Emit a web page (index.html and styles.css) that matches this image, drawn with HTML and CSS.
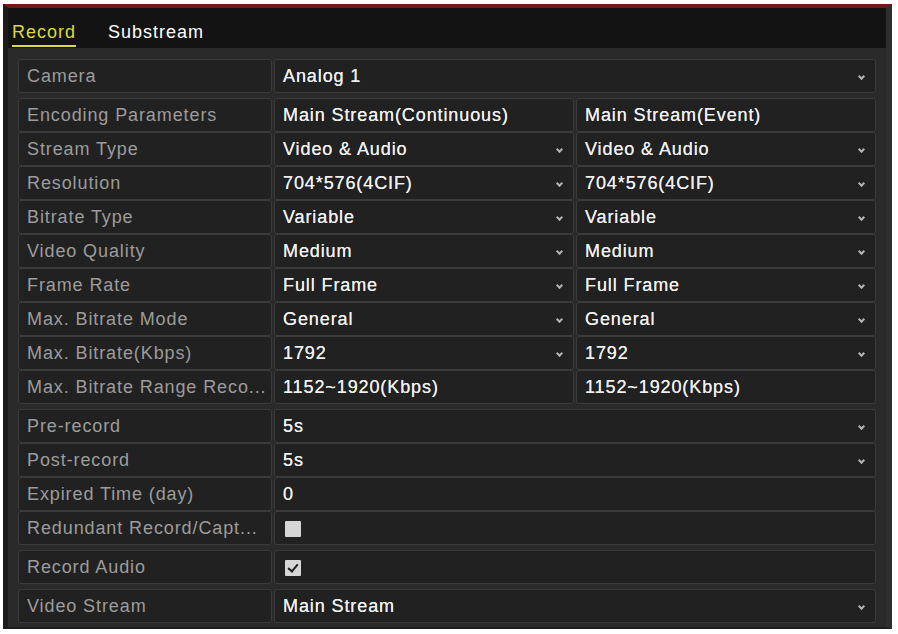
FILE: index.html
```html
<!DOCTYPE html>
<html lang="en">
<head>
    <meta charset="UTF-8">
    <title>Record</title>
    <link rel="stylesheet" href="styles.css">
</head>
<body>
    <div class="panel">
        <div class="tabs">
            <span class="tab active">Record</span>
            <span class="tab">Substream</span>
        </div>

        <div class="content">
            <div class="group">
                <div class="row">
                    <div class="label">Camera</div>
                    <div class="cell select">Analog 1</div>
                </div>
            </div>

            <div class="group">
                <div class="row dual">
                    <div class="label">Encoding Parameters</div>
                    <div class="cell">Main Stream(Continuous)</div>
                    <div class="cell">Main Stream(Event)</div>
                </div>
                <div class="row dual">
                    <div class="label">Stream Type</div>
                    <div class="cell select">Video &amp; Audio</div>
                    <div class="cell select">Video &amp; Audio</div>
                </div>
                <div class="row dual">
                    <div class="label">Resolution</div>
                    <div class="cell select">704*576(4CIF)</div>
                    <div class="cell select">704*576(4CIF)</div>
                </div>
                <div class="row dual">
                    <div class="label">Bitrate Type</div>
                    <div class="cell select">Variable</div>
                    <div class="cell select">Variable</div>
                </div>
                <div class="row dual">
                    <div class="label">Video Quality</div>
                    <div class="cell select">Medium</div>
                    <div class="cell select">Medium</div>
                </div>
                <div class="row dual">
                    <div class="label">Frame Rate</div>
                    <div class="cell select">Full Frame</div>
                    <div class="cell select">Full Frame</div>
                </div>
                <div class="row dual">
                    <div class="label">Max. Bitrate Mode</div>
                    <div class="cell select">General</div>
                    <div class="cell select">General</div>
                </div>
                <div class="row dual">
                    <div class="label">Max. Bitrate(Kbps)</div>
                    <div class="cell select">1792</div>
                    <div class="cell select">1792</div>
                </div>
                <div class="row dual">
                    <div class="label">Max. Bitrate Range Reco...</div>
                    <div class="cell">1152~1920(Kbps)</div>
                    <div class="cell">1152~1920(Kbps)</div>
                </div>
            </div>

            <div class="group">
                <div class="row">
                    <div class="label">Pre-record</div>
                    <div class="cell select">5s</div>
                </div>
                <div class="row">
                    <div class="label">Post-record</div>
                    <div class="cell select">5s</div>
                </div>
                <div class="row">
                    <div class="label">Expired Time (day)</div>
                    <div class="cell">0</div>
                </div>
                <div class="row">
                    <div class="label">Redundant Record/Capt...</div>
                    <div class="cell"><span class="checkbox"></span></div>
                </div>
            </div>

            <div class="group">
                <div class="row">
                    <div class="label">Record Audio</div>
                    <div class="cell"><span class="checkbox checked"></span></div>
                </div>
            </div>

            <div class="group">
                <div class="row">
                    <div class="label">Video Stream</div>
                    <div class="cell select">Main Stream</div>
                </div>
            </div>
        </div>
    </div>
</body>
</html>
```
FILE: styles.css
```css
body {
    margin: 0;
    background-color: white;
    font-family: "Liberation Sans", Arial, sans-serif;
}

.panel {
    margin: 4px 0 0 3px;
    width: 878px;
    border-top: 4px solid #6d1c1c;
    border-left: 5px solid #1b1b1b;
    border-right: 6px solid #2e2e2e;
    border-bottom: 2px solid #1e1e1e;
    background-color: #2a2a2a;
}

.tabs {
    height: 40px;
    background-color: #131313;
    display: flex;
    align-items: flex-end;
    gap: 32px;
    padding-left: 4px;
    box-sizing: border-box;
}

.tab {
    color: white;
    font-size: 18px;
    letter-spacing: 1px;
    padding-bottom: 2px;
    margin-bottom: 1px;
    border-bottom: 2px solid transparent;
}

.tab.active {
    color: #dada3c;
    border-bottom-color: #dada3c;
}

.content {
    padding: 11px 10px 4px 10px;
    display: flex;
    flex-direction: column;
    gap: 5px;
}

.group {
    display: flex;
    flex-direction: column;
}

.row {
    display: grid;
    grid-template-columns: 254px 1fr;
    column-gap: 2px;
    height: 34px;
}

.row.dual {
    grid-template-columns: 254px 1fr 1fr;
}

.label, .cell {
    position: relative;
    display: flex;
    align-items: center;
    padding-left: 8px;
    padding-top: 1px;
    background-color: #212121;
    border: 1px solid #3b3b3b;
    border-radius: 3px;
    font-size: 18px;
    letter-spacing: 0.9px;
    white-space: nowrap;
    overflow: hidden;
}

.label {
    color: #9c9c9c;
}

.cell {
    color: #f0f0f0;
    text-shadow: 0 0 0.4px #f0f0f0;
}

.select::after {
    content: "";
    position: absolute;
    right: 11px;
    top: 14px;
    width: 3px;
    height: 3px;
    border-right: 2px solid #b4b4b4;
    border-bottom: 2px solid #b4b4b4;
    transform: rotate(45deg);
}

.checkbox {
    width: 16px;
    height: 16px;
    margin-left: 2px;
    background-color: #d6d6d6;
    border-radius: 1px;
    position: relative;
}

.checkbox.checked::after {
    content: "";
    position: absolute;
    left: 5px;
    top: 2px;
    width: 4px;
    height: 8px;
    border-right: 2px solid #202020;
    border-bottom: 2px solid #202020;
    transform: rotate(40deg);
}
```
